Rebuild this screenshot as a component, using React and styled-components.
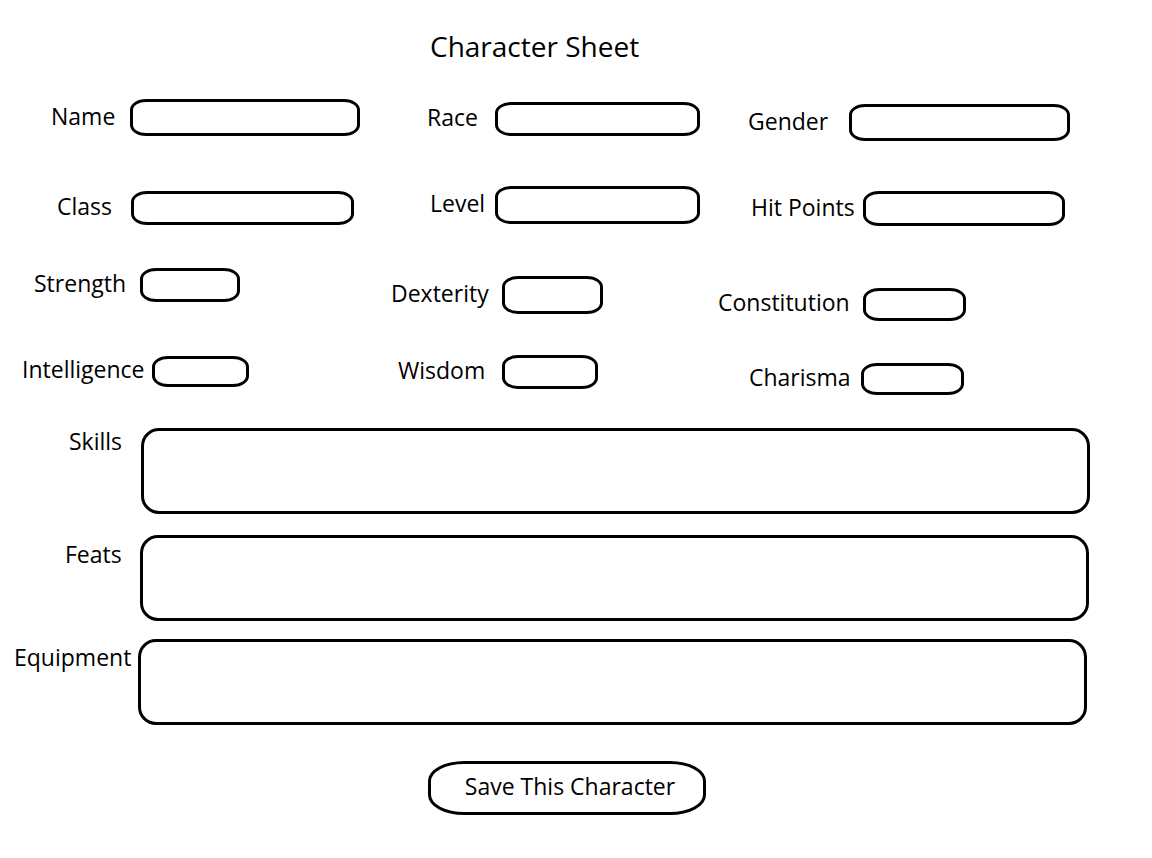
import React from 'react'
import styled, { createGlobalStyle } from 'styled-components'

const GlobalStyle = createGlobalStyle`
body {
  margin: 0;
  background: #fff;
  font-family: "Open Sans", "Liberation Sans", sans-serif;
  color: #000;
}
`

const Page = styled.div`
width: 1152px;
height: 858px;
padding-top: 28px;
box-sizing: border-box;
background: #fff;
overflow: hidden;
`

const Title = styled.h1`
margin: 0 0 0 430px;
font-size: 28px;
font-weight: 400;
line-height: 36px;
`

const Row = styled.div`
display: grid;
grid-template-columns: 380px 320px 1fr;
align-items: start;
height: ${props => props.$h}px;
margin-top: ${props => props.$mt || 0}px;
`

const Field = styled.div`
display: flex;
align-items: center;
padding-left: ${props => props.$indent}px;
margin-top: ${props => props.$dy}px;
`

const Label = styled.span`
width: ${props => props.$w}px;
flex-shrink: 0;
margin-bottom: 4px;
font-size: 23px;
line-height: 30px;
white-space: nowrap;
`

const Input = styled.div`
box-sizing: border-box;
width: ${props => props.$w}px;
height: ${props => props.$h}px;
border: 3px solid #000;
border-radius: 16px / 11px;
`

const Notes = styled.div`
display: flex;
flex-direction: column;
`

const Area = styled.div`
display: flex;
align-items: flex-start;
margin-top: ${props => props.$mt}px;
padding-left: ${props => props.$indent}px;
`

const AreaLabel = styled(Label)`
margin-top: ${props => props.$dy}px;
`

const AreaBox = styled.div`
box-sizing: border-box;
width: 949px;
height: 86px;
border: 3px solid #000;
border-radius: 18px;
`

const SaveButton = styled.button`
display: block;
box-sizing: border-box;
margin: 36px 0 0 428px;
width: 278px;
height: 54px;
padding: 0 0 4px 6px;
background: #fff;
border: 3px solid #000;
border-radius: 36px / 20px;
font-family: "Open Sans", "Liberation Sans", sans-serif;
font-size: 23px;
color: #000;
cursor: pointer;
`

const rows = [
  {
    h: 87, mt: 35, fields: [
      { label: 'Name', indent: 51, lw: 79, w: 230, h: 37, dy: 0 },
      { label: 'Race', indent: 47, lw: 68, w: 206, h: 34, dy: 3 },
      { label: 'Gender', indent: 48, lw: 101, w: 221, h: 37, dy: 5 },
    ]
  },
  {
    h: 82, fields: [
      { label: 'Class', indent: 57, lw: 74, w: 223, h: 34, dy: 5 },
      { label: 'Level', indent: 50, lw: 65, w: 209, h: 38, dy: 0 },
      { label: 'Hit Points', indent: 51, lw: 112, w: 202, h: 35, dy: 5 },
    ]
  },
  {
    h: 86, fields: [
      { label: 'Strength', indent: 34, lw: 106, w: 100, h: 34, dy: 0 },
      { label: 'Dexterity', indent: 11, lw: 111, w: 101, h: 38, dy: 8 },
      { label: 'Constitution', indent: 18, lw: 145, w: 103, h: 33, dy: 19 },
    ]
  },
  {
    h: 74, fields: [
      { label: 'Intelligence', indent: 22, lw: 130, w: 97, h: 31, dy: 0 },
      { label: 'Wisdom', indent: 18, lw: 104, w: 96, h: 34, dy: 1 },
      { label: 'Charisma', indent: 49, lw: 112, w: 103, h: 32, dy: 8 },
    ]
  },
]

const areas = [
  { label: 'Skills', indent: 69, lw: 72, mt: 0, dy: -2 },
  { label: 'Feats', indent: 65, lw: 75, mt: 21, dy: 4 },
  { label: 'Equipment', indent: 14, lw: 124, mt: 18, dy: 3 },
]

const App = () => {
  return (
    <Page>
      <GlobalStyle />
      <Title>Character Sheet</Title>

      {rows.map((row, i) =>
        <Row key={i} $h={row.h} $mt={row.mt}>
          {row.fields.map(f =>
            <Field key={f.label} $indent={f.indent} $dy={f.dy}>
              <Label $w={f.lw}>{f.label}</Label>
              <Input $w={f.w} $h={f.h} />
            </Field>
          )}
        </Row>
      )}

      <Notes>
        {areas.map(a =>
          <Area key={a.label} $mt={a.mt} $indent={a.indent}>
            <AreaLabel $w={a.lw} $dy={a.dy}>{a.label}</AreaLabel>
            <AreaBox />
          </Area>
        )}
      </Notes>

      <SaveButton>Save This Character</SaveButton>
    </Page>
  )
}

export default App
